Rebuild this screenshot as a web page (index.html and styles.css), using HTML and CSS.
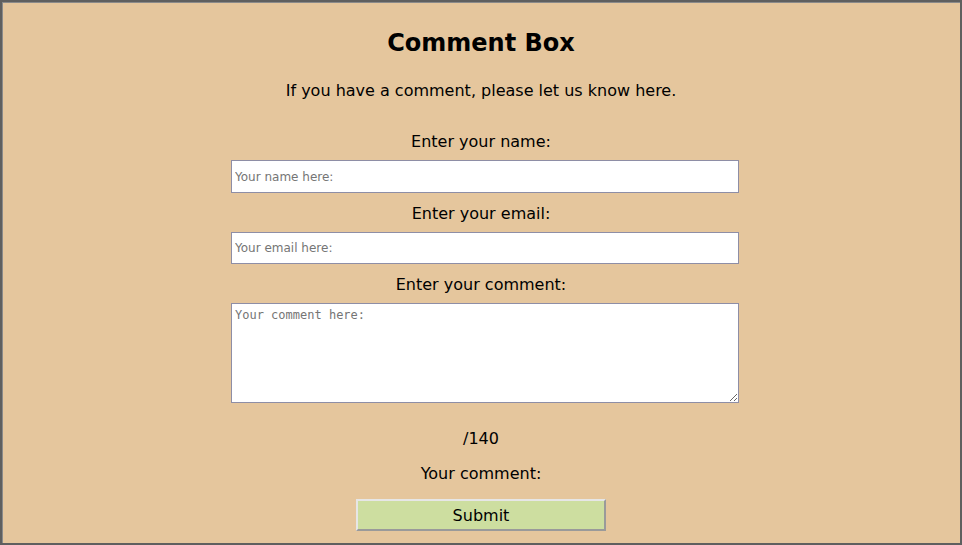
FILE: index.html
```html
<!DOCTYPE html>
<html>
<head>
<meta charset="utf-8">
<link rel="stylesheet" href="styles.css">
</head>
<body>
<div class="frame">
  <h1 class="title">Comment Box</h1>
  <p class="intro">If you have a comment, please let us know here.</p>
  <form class="form">
    <label class="label label-first" for="name">Enter your name:</label>
    <input class="field" id="name" type="text" placeholder="Your name here:">
    <label class="label" for="email">Enter your email:</label>
    <input class="field field-email" id="email" type="text" placeholder="Your email here:">
    <label class="label" for="comment">Enter your comment:</label>
    <textarea class="area" id="comment" placeholder="Your comment here:"></textarea>
    <div class="count">/140</div>
    <div class="yours">Your comment:</div>
    <button class="submit" type="button">Submit</button>
  </form>
</div>
</body>
</html>
```
FILE: styles.css
```css
html, body {
  margin: 0;
  padding: 0;
}
body {
  font-family: "DejaVu Sans", Verdana, sans-serif;
  color: #000;
}
.frame {
  box-sizing: border-box;
  width: 962px;
  height: 545px;
  background: #e5c69d;
  border: 2px solid #5f5f5f;
  box-shadow: inset 1px 1px 0 #8a8a8a;
  display: flex;
  flex-direction: column;
  align-items: center;
  padding-top: 27px;
}
.title {
  margin: 0;
  font-size: 24px;
  line-height: 28px;
  font-weight: bold;
}
.intro {
  margin: 24px 0 0;
  font-size: 16px;
  line-height: 19px;
}
.form {
  display: flex;
  flex-direction: column;
  align-items: center;
}
.label {
  font-size: 16px;
  line-height: 19px;
  margin-top: 11px;
  margin-bottom: 9px;
}
.label-first {
  margin-top: 32px;
}
.field {
  box-sizing: border-box;
  width: 508px;
  height: 33px;
  border: 1px solid #8e8ea6;
  background: #fff;
  padding: 0 3px;
  font-family: "DejaVu Sans", sans-serif;
  font-size: 12px;
  margin: 0 0 0 8px;
}
.field-email {
  height: 32px;
}
.field::placeholder {
  color: #757575;
}
.area {
  box-sizing: border-box;
  width: 508px;
  height: 100px;
  border: 1px solid #8e8ea6;
  background: #fff;
  padding: 4px 3px;
  font-family: "DejaVu Sans Mono", monospace;
  font-size: 12px;
  margin: 0 0 0 8px;
  resize: both;
}
.area::placeholder {
  color: #757575;
}
.count {
  font-size: 16px;
  line-height: 19px;
  margin-top: 26px;
}
.yours {
  font-size: 16px;
  line-height: 19px;
  margin-top: 16px;
}
.submit {
  box-sizing: border-box;
  width: 250px;
  height: 32px;
  margin-top: 16px;
  background: #cddea0;
  border: 2px solid;
  border-color: #e6e6e6 #9a9a9a #9a9a9a #e6e6e6;
  font-family: "DejaVu Sans", sans-serif;
  font-size: 16px;
  color: #000;
  padding: 0;
}
```
